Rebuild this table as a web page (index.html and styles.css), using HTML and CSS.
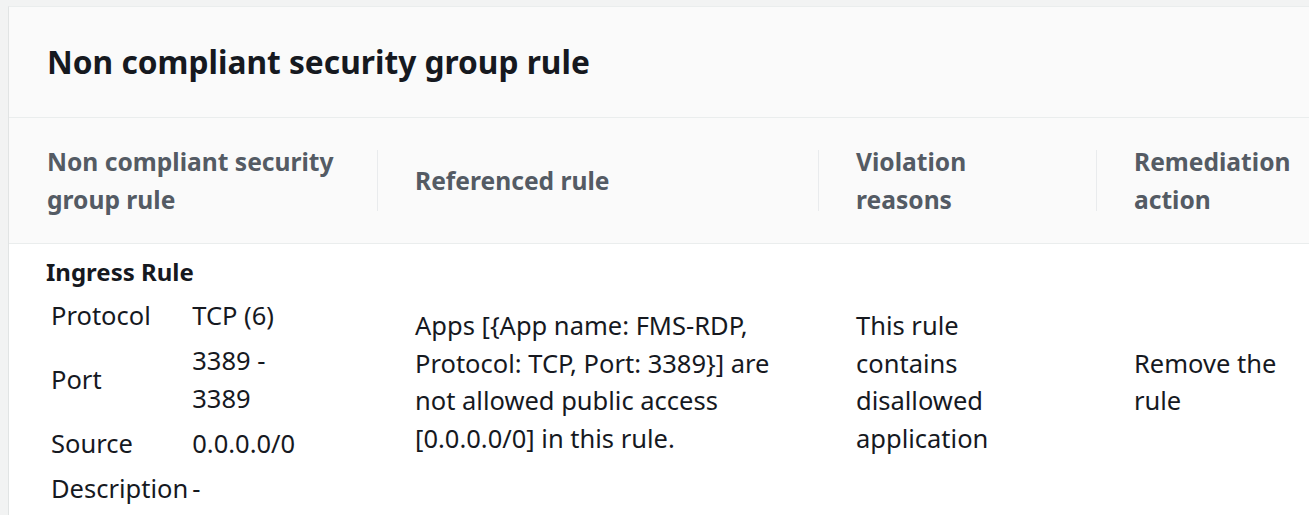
FILE: index.html
```html
<!DOCTYPE html>
<html>
<head>
<meta charset="utf-8">
<link rel="stylesheet" href="styles.css">
</head>
<body>
<div class="card">
  <div class="card-header">
    <h2 class="title">Non compliant security group rule</h2>
  </div>
  <table class="grid">
    <colgroup>
      <col class="c1"><col class="c2"><col class="c3"><col class="c4">
    </colgroup>
    <thead>
      <tr>
        <th><span class="th-text">Non compliant security group rule</span></th>
        <th class="div"><span class="th-text">Referenced rule</span></th>
        <th class="div"><span class="th-text">Violation reasons</span></th>
        <th class="div"><span class="th-text">Remediation action</span></th>
      </tr>
    </thead>
    <tbody>
      <tr>
        <td class="first">
          <div class="rule-name">Ingress Rule</div>
          <table class="kv">
            <tr><td class="k">Protocol</td><td class="v">TCP (6)</td></tr>
            <tr><td class="k">Port</td><td class="v">3389 - 3389</td></tr>
            <tr><td class="k">Source</td><td class="v">0.0.0.0/0</td></tr>
            <tr><td class="k">Description</td><td class="v">-</td></tr>
          </table>
        </td>
        <td>Apps [{App name: FMS-RDP, Protocol: TCP, Port: 3389}] are not allowed public access [0.0.0.0/0] in this rule.</td>
        <td>This rule contains disallowed application</td>
        <td>Remove the rule</td>
      </tr>
    </tbody>
  </table>
</div>
</body>
</html>
```

FILE: styles.css
```css
html, body {
  margin: 0;
  padding: 0;
  background: #f2f3f3;
  overflow: hidden;
}
body {
  font-family: "Noto Sans", "Open Sans", sans-serif;
  color: #16191f;
  padding: 6px 0 0 8px;
}
.card {
  width: 1340px;
  background: #fafafa;
  border-left: 1px solid #e1e4e4;
  border-top: 1px solid #eaeded;
}
.card-header {
  height: 110px;
  display: flex;
  align-items: center;
  padding: 0 38px;
  border-bottom: 1px solid #eaeded;
}
.title {
  margin: 0;
  font-size: 31.7px;
  line-height: 40px;
  font-weight: 700;
  color: #16191f;
}
.grid {
  border-collapse: collapse;
  width: 100%;
  table-layout: fixed;
}
.c1 { width: 368px; }
.c2 { width: 441px; }
.c3 { width: 278px; }
.c4 { width: auto; }
.grid > thead > tr > th {
  position: relative;
  text-align: left;
  vertical-align: middle;
  font-size: 24.6px;
  line-height: 37.5px;
  font-weight: 700;
  color: #545b64;
  background: #fafafa;
  padding: 25px 38px 25px 38px;
  height: 75px;
  border-bottom: 1px solid #eaeded;
}
.grid > thead > tr > th.div::before {
  content: "";
  position: absolute;
  left: 0;
  top: 32px;
  bottom: 32px;
  width: 1px;
  background: #e9ebed;
}
.grid > tbody > tr > td {
  background: #fff;
  vertical-align: middle;
  font-size: 25.5px;
  line-height: 37.5px;
  padding: 9px 38px 9px 38px;
}
.grid > tbody > tr > td.first {
  padding-left: 37px;
  padding-right: 20px;
}
.rule-name {
  font-size: 24px;
  font-weight: 700;
  margin-bottom: 3px;
}
.kv {
  border-collapse: collapse;
  margin-left: 1px;
}
.kv td {
  padding: 3.75px 4px;
  vertical-align: middle;
  font-size: 25.5px;
  line-height: 37.5px;
}
.kv td.k {
  width: 129px;
  padding-right: 1px;
  white-space: nowrap;
}
.kv td.v {
  padding-left: 3px;
  width: 120px;
}
```
